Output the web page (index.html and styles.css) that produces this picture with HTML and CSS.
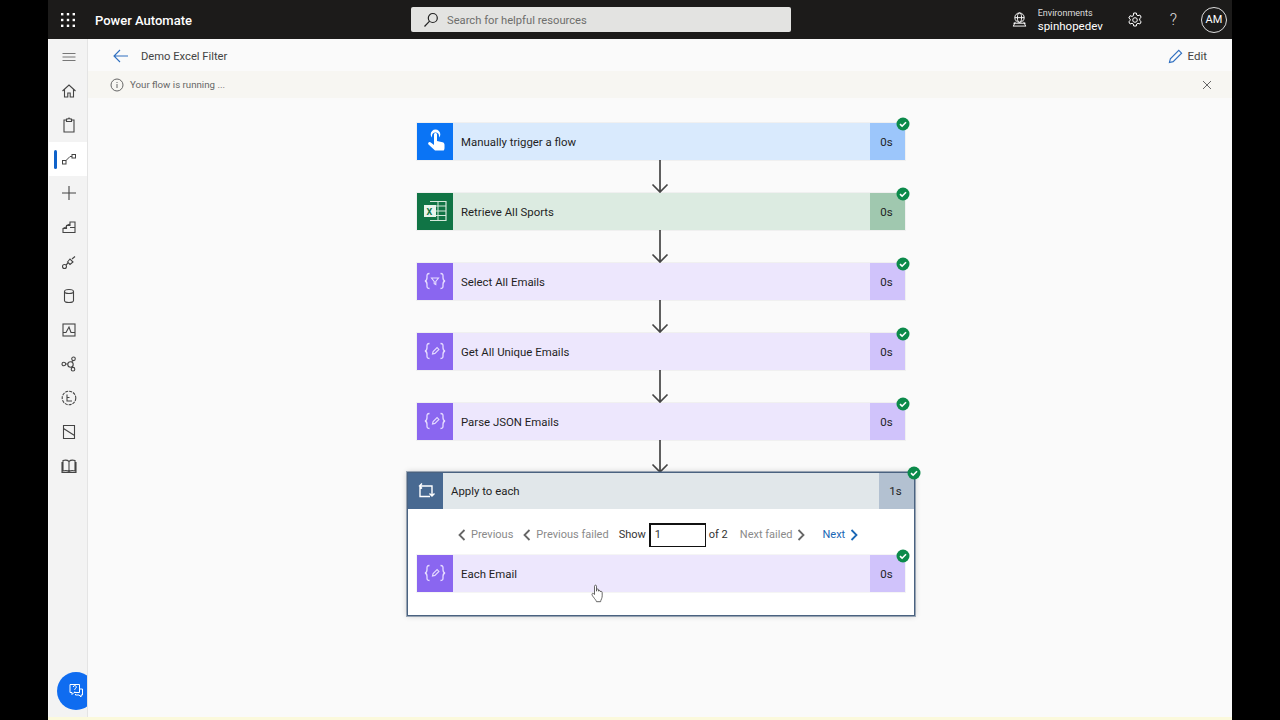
FILE: index.html
```html
<!DOCTYPE html>
<html lang="en">
<head>
    <meta charset="UTF-8">
    <title>Power Automate</title>
    <link rel="stylesheet" href="styles.css">
</head>
<body>
<svg class="defs" width="0" height="0">
    <symbol id="check" viewBox="0 0 14 14">
        <circle cx="7" cy="7" r="6.500" fill="#0b8a4a"/>
        <path d="M4 7.200l2.100 2L10 5.200" fill="none" stroke="#fff" stroke-width="1.600"/>
    </symbol>
    <symbol id="arrow" viewBox="0 0 18 33">
        <path d="M9 0v32M1.500 24.500L9 32l7.500-7.500" fill="none" stroke="#444" stroke-width="1.700"/>
    </symbol>
    <symbol id="braces" viewBox="0 0 36 36">
        <path d="M12.500 10.500c-3 0-2.500 2-2.500 4s0 3-2 3.500c2 .5 2 1.500 2 3.500s-.5 4 2.500 4M23.500 10.500c3 0 2.500 2 2.500 4s0 3 2 3.500c-2 .5-2 1.500-2 3.500s.5 4-2.500 4" fill="none" stroke="#e6dcff" stroke-width="1.300"/>
        <path d="M15.500 21l.6-2.400 4-4 1.800 1.800-4 4z" fill="none" stroke="#e6dcff" stroke-width="1.100"/>
    </symbol>
    <symbol id="braces-filter" viewBox="0 0 36 36">
        <path d="M12.500 10.500c-3 0-2.500 2-2.500 4s0 3-2 3.500c2 .5 2 1.500 2 3.500s-.5 4 2.500 4M23.500 10.500c3 0 2.500 2 2.500 4s0 3 2 3.500c-2 .5-2 1.500-2 3.500s.5 4-2.500 4" fill="none" stroke="#e6dcff" stroke-width="1.300"/>
        <path d="M14.500 15h7l-2.700 3.500v3l-1.600-.8v-2.200z" fill="none" stroke="#e6dcff" stroke-width="1.100"/>
    </symbol>
</svg>

<div class="app">
    <header class="topbar">
        <svg class="waffle" width="16" height="16" viewBox="0 0 16 16" fill="#fff">
            <rect x="1" y="1" width="2.400" height="2.400"/><rect x="6.800" y="1" width="2.400" height="2.400"/><rect x="12.600" y="1" width="2.400" height="2.400"/>
            <rect x="1" y="6.800" width="2.400" height="2.400"/><rect x="6.800" y="6.800" width="2.400" height="2.400"/><rect x="12.600" y="6.800" width="2.400" height="2.400"/>
            <rect x="1" y="12.600" width="2.400" height="2.400"/><rect x="6.800" y="12.600" width="2.400" height="2.400"/><rect x="12.600" y="12.600" width="2.400" height="2.400"/>
        </svg>
        <span class="brand">Power Automate</span>
        <div class="search">
            <svg width="16" height="16" viewBox="0 0 16 16" fill="none" stroke="#222" stroke-width="1.200"><circle cx="9.800" cy="6" r="4.500"/><path d="M6.600 9.200L1.500 14.500"/></svg>
            <span class="search-text">Search for helpful resources</span>
        </div>
        <div class="top-right">
            <svg class="globe" width="15" height="15" viewBox="0 0 16 16" fill="none" stroke="#fff" stroke-width="1"><circle cx="8" cy="6" r="5"/><ellipse cx="8" cy="6" rx="2.200" ry="5"/><path d="M3 6h10M1.500 12h13M1 15h14M3.500 10.500L1.500 15M12.500 10.500l2 4.500"/></svg>
            <div class="env">
                <div class="env-label">Environments</div>
                <div class="env-name">spinhopedev</div>
            </div>
            <svg class="gear" width="16" height="16" viewBox="0 0 16 16" fill="none" stroke="#fff" stroke-width="1"><circle cx="8" cy="8" r="2.300"/><path d="M6.700 1h2.600l.4 2 1.300.7 1.900-.7 1.300 2.300-1.500 1.300v1.800l1.500 1.300-1.300 2.300-1.900-.7-1.300.7-.4 2H6.700l-.4-2-1.300-.7-1.900.7-1.300-2.300 1.500-1.300V7.300L1.800 6l1.300-2.300 1.900.7 1.300-.7z"/></svg>
            <span class="help">?</span>
            <span class="avatar">AM</span>
        </div>
    </header>

    <div class="body-row">
        <nav class="sidebar">
            <div class="nav-item nav-menu"><svg width="16" height="16" viewBox="0 0 16 16" stroke="#777" stroke-width="1"><path d="M1.500 4.500h13M1.500 8h13M1.500 11.500h13"/></svg></div>
            <div class="nav-item"><svg width="16" height="16" viewBox="0 0 16 16" fill="none" stroke="#444" stroke-width="1.100"><path d="M1.500 8L8 2l6.500 6M3.500 6.500V14h3.300v-4h2.400v4h3.300V6.500"/></svg></div>
            <div class="nav-item"><svg width="16" height="16" viewBox="0 0 16 16" fill="none" stroke="#444" stroke-width="1.100"><path d="M5.500 3H3v12h10V3h-2.500M5.500 2h1.500a1 1 0 0 1 2 0h1.500v2.500h-5z"/></svg></div>
            <div class="nav-item nav-active"><svg width="16" height="16" viewBox="0 0 16 16" fill="none" stroke="#444" stroke-width="1"><rect x="1.500" y="9.500" width="3.500" height="3.500"/><rect x="11" y="3.500" width="3.500" height="3.500"/><path d="M5 9.500L9 5.500h2"/></svg></div>
            <div class="nav-item"><svg width="16" height="16" viewBox="0 0 16 16" stroke="#444" stroke-width="1.100"><path d="M8 1v14M1 8h14"/></svg></div>
            <div class="nav-item"><svg width="16" height="16" viewBox="0 0 16 16" fill="none" stroke="#444" stroke-width="1.100"><path d="M2 13.500V9.500h3.500V6.500H9V3h5v10.500zM2 9.500l3-1.500M5.500 6.500L9 5M9 8.500h5"/></svg></div>
            <div class="nav-item"><svg width="16" height="16" viewBox="0 0 16 16" fill="none" stroke="#444" stroke-width="1.100"><circle cx="3.500" cy="12.500" r="2"/><path d="M5 11l2-2M11 5l3-2.500"/><path d="M6.500 8L9 5l3 3-3 2.500z"/></svg></div>
            <div class="nav-item"><svg width="16" height="16" viewBox="0 0 16 16" fill="none" stroke="#444" stroke-width="1.100"><ellipse cx="8" cy="3.500" rx="4.500" ry="2"/><path d="M3.500 3.500v9c0 1.100 2 2 4.500 2s4.500-.9 4.500-2v-9"/></svg></div>
            <div class="nav-item"><svg width="16" height="16" viewBox="0 0 16 16" fill="none" stroke="#444" stroke-width="1.100"><rect x="2" y="2" width="12" height="12"/><path d="M2 10.500h3L8 5l2 5.500h4"/></svg></div>
            <div class="nav-item"><svg width="16" height="16" viewBox="0 0 16 16" fill="none" stroke="#444" stroke-width="1.100"><circle cx="2.800" cy="8" r="1.800"/><circle cx="9.500" cy="8.500" r="2.700"/><circle cx="12.500" cy="2.800" r="1.800"/><circle cx="12" cy="13.200" r="1.800"/><path d="M4.600 8h2.200M10.800 6l1-1.500M11 11l.5.500"/></svg></div>
            <div class="nav-item"><svg width="16" height="16" viewBox="0 0 16 16" fill="none" stroke="#444" stroke-width="1.100"><circle cx="8" cy="8" r="6.800" stroke-dasharray="3 1"/><path d="M6 4.500v6.500h5M6 7.500h2.500"/></svg></div>
            <div class="nav-item"><svg width="16" height="16" viewBox="0 0 16 16" fill="none" stroke="#444" stroke-width="1.100"><path d="M2.500 1.500h11v13h-11zM2.500 4.500l11 7"/></svg></div>
            <div class="nav-item"><svg width="16" height="16" viewBox="0 0 16 16" fill="none" stroke="#444" stroke-width="1.100"><path d="M8 3.500C6.500 2 4 2 2 2.500v10.500c2-.5 4.500-.5 6 .5 1.500-1 4-1 6-.5V2.500C12 2 9.500 2 8 3.500zM8 3.500v10M1 4v10.500h14V4"/></svg></div>
            <div class="help-fab"><svg width="16" height="16" viewBox="0 0 16 16" fill="none" stroke="#fff" stroke-width="1"><path d="M2 1.500h9.500v8H6L4 11.500v-2H2z"/><path d="M11.500 6h3v6H13v2l-2-2H7.500v-1"/><path d="M5.300 4a1.500 1.500 0 1 1 2 1.500l-.5.700V7M6.800 8v.5"/></svg></div>
        </nav>

        <main class="main">
            <div class="cmdbar">
                <svg class="back" width="16" height="14" viewBox="0 0 16 14" fill="none" stroke="#2f6fc0" stroke-width="1.100"><path d="M15 7H1.200M7 1L1 7l6 6"/></svg>
                <span class="flow-title">Demo Excel Filter</span>
                <button class="edit">
                    <svg width="15" height="15" viewBox="0 0 16 16" fill="none" stroke="#2f6fc0" stroke-width="1.200"><path d="M1.500 14.500l1-4L11.500 1.500l3 3-9 9z"/></svg>
                    <span>Edit</span>
                </button>
            </div>
            <div class="notice">
                <svg width="14" height="14" viewBox="0 0 14 14" fill="none" stroke="#666" stroke-width="1"><circle cx="7" cy="7" r="6"/><path d="M7 6v4M7 4v1"/></svg>
                <span>Your flow is running ...</span>
                <svg class="close" width="10" height="10" viewBox="0 0 10 10" stroke="#666" stroke-width="1"><path d="M1 1l8 8M9 1L1 9"/></svg>
            </div>

            <div class="canvas">
                <div class="card card-trigger">
                    <div class="card-icon"><svg width="36" height="36" viewBox="0 0 36 36" fill="#fff"><path d="M18.500 6.500a4.800 4.800 0 0 1 4.800 4.800c0 1.300-.5 2.400-1.300 3.300v-1.500a3.500 3.500 0 1 0-7 0v1.500c-.8-.9-1.300-2-1.300-3.300a4.800 4.800 0 0 1 4.800-4.800z"/><path d="M17 11.500c0-.9.600-1.500 1.500-1.500s1.500.6 1.500 1.500v6.500l5.500 1.200c1.400.3 2 1.200 2 2.600v3.200c0 1-.3 2-.8 2.500H18l-6.500-6c-.7-.9-.3-2 .5-2.300.8-.3 1.500 0 2.100.6l2.900 2.200z"/></svg></div>
                    <div class="card-title">Manually trigger a flow</div>
                    <div class="card-time">0s</div>
                    <svg class="badge"><use href="#check"/></svg>
                </div>
                <svg class="connector"><use href="#arrow"/></svg>

                <div class="card card-excel">
                    <div class="card-icon"><svg width="36" height="36" viewBox="0 0 36 36"><path d="M13 8.500h16v19H13" fill="none" stroke="#d5e9dc" stroke-width="1.200"/><path d="M21 8.500v19M13 13h16M13 18h16M13 22.500h16" stroke="#d5e9dc" stroke-width="1"/><rect x="7" y="12" width="12" height="12" fill="#e8f3ec"/><text x="9.500" y="21.500" class="xl-mark">X</text></svg></div>
                    <div class="card-title">Retrieve All Sports</div>
                    <div class="card-time">0s</div>
                    <svg class="badge"><use href="#check"/></svg>
                </div>
                <svg class="connector"><use href="#arrow"/></svg>

                <div class="card card-data">
                    <div class="card-icon"><svg width="36" height="36"><use href="#braces-filter"/></svg></div>
                    <div class="card-title">Select All Emails</div>
                    <div class="card-time">0s</div>
                    <svg class="badge"><use href="#check"/></svg>
                </div>
                <svg class="connector"><use href="#arrow"/></svg>

                <div class="card card-data">
                    <div class="card-icon"><svg width="36" height="36"><use href="#braces"/></svg></div>
                    <div class="card-title">Get All Unique Emails</div>
                    <div class="card-time">0s</div>
                    <svg class="badge"><use href="#check"/></svg>
                </div>
                <svg class="connector"><use href="#arrow"/></svg>

                <div class="card card-data">
                    <div class="card-icon"><svg width="36" height="36"><use href="#braces"/></svg></div>
                    <div class="card-title">Parse JSON Emails</div>
                    <div class="card-time">0s</div>
                    <svg class="badge"><use href="#check"/></svg>
                </div>
                <svg class="connector"><use href="#arrow"/></svg>

                <div class="loop">
                    <div class="card card-loop">
                        <div class="card-icon"><svg width="35" height="36" viewBox="0 0 35 36" fill="none" stroke="#fff" stroke-width="1.400"><path d="M11.500 13H24v9.500M22 23.500H12V13.500M14 10.500L11.500 13l2.500 2.500M21.500 20.500L24 23l2.500-2.500"/></svg></div>
                        <div class="card-title">Apply to each</div>
                        <div class="card-time">1s</div>
                    </div>
                    <svg class="badge badge-loop"><use href="#check"/></svg>
                    <div class="pager">
                        <span class="page-btn"><svg class="chev" viewBox="0 0 8 12"><path d="M6.500 1L1.500 6l5 5"/></svg>Previous</span>
                        <span class="page-btn"><svg class="chev" viewBox="0 0 8 12"><path d="M6.500 1L1.500 6l5 5"/></svg>Previous failed</span>
                        <span class="show">Show</span>
                        <span class="page-input">1</span>
                        <span class="of">of 2</span>
                        <span class="page-btn">Next failed<svg class="chev chev-r" viewBox="0 0 8 12"><path d="M1.500 1l5 5-5 5"/></svg></span>
                        <span class="page-btn page-next">Next<svg class="chev chev-r" viewBox="0 0 8 12"><path d="M1.500 1l5 5-5 5"/></svg></span>
                    </div>
                    <div class="card card-data">
                        <div class="card-icon"><svg width="36" height="36"><use href="#braces"/></svg></div>
                        <div class="card-title">Each Email</div>
                        <div class="card-time">0s</div>
                        <svg class="badge"><use href="#check"/></svg>
                    </div>
                    <svg class="cursor" width="14" height="19" viewBox="0 0 14 19" fill="#fff" stroke="#555" stroke-width=".9"><path d="M3.500 10.500V2.200c0-1.400 2-1.400 2 0v5l.2-1.500c.2-1 1.700-1 1.800 0v1.500c.2-1 1.700-1 1.800 0V8c.3-.9 1.700-.8 1.800.2.200 2.500.2 5-.5 6.500-.6 1.300-1 2-1 3H5.500c-.5-1.500-1.500-2.500-3-4.500-.8-1-1.500-2-1.500-3 0-.9 1-1.200 1.500-.6z"/></svg>
                </div>
            </div>
        </main>
    </div>
</div>
</body>
</html>
```
FILE: styles.css
```css
body {
    margin: 0;
    height: 720px;
    overflow: hidden;
    background-color: #000;
    font-family: Roboto, "Open Sans", sans-serif;
    color: #323130;
}
.defs {
    position: absolute;
}
.app {
    width: 1184px;
    height: 720px;
    margin: 0 auto;
    display: flex;
    flex-direction: column;
    background-color: #fafafa;
    border-bottom: 3px solid #fbf9dc;
    box-sizing: border-box;
}
.topbar {
    height: 39px;
    flex: none;
    display: flex;
    align-items: center;
    padding-left: 12px;
    background-color: #1c1b1a;
    color: #fff;
}
.brand {
    margin-left: 19px;
    padding-top: 1px;
    font-size: 13px;
    font-weight: 500;
    width: 316px;
}
.search {
    width: 380px;
    height: 25px;
    display: flex;
    align-items: center;
    gap: 8px;
    padding-left: 12px;
    box-sizing: border-box;
    background-color: #e3e3e1;
    border-radius: 2px;
    color: #6e6e6c;
    font-size: 11.200px;
}
.search-text {
    padding-top: 2px;
}
.top-right {
    margin-left: auto;
    display: flex;
    align-items: center;
    padding-right: 5px;
}
.env {
    margin-left: 11px;
    margin-right: 23px;
    width: 66px;
}
.env-label {
    font-size: 9px;
    line-height: 12px;
    color: #ddd;
}
.env-name {
    font-size: 11.500px;
    line-height: 14px;
}
.help {
    margin-left: 27px;
    margin-right: 24px;
    font-size: 16px;
    font-weight: 300;
    color: #ddd;
}
.avatar {
    width: 26px;
    height: 26px;
    box-sizing: border-box;
    border: 1px solid #ddd;
    border-radius: 50%;
    display: flex;
    align-items: center;
    justify-content: center;
    font-size: 11px;
}
.body-row {
    flex: 1;
    display: flex;
    min-height: 0;
}
.sidebar {
    position: relative;
    width: 40px;
    flex: none;
    box-sizing: border-box;
    overflow: hidden;
    background-color: #f3f3f3;
    border-right: 1px solid #e4e4e4;
    border-left: 1px solid #f8f8f8;
}
.nav-item {
    position: relative;
    height: 34.100px;
    box-sizing: border-box;
    padding-left: 2px;
    display: flex;
    align-items: center;
    justify-content: center;
}
.nav-menu {
    height: 35px;
}
.nav-active {
    background-color: #fff;
}
.nav-active::before {
    content: "";
    position: absolute;
    left: 5px;
    top: 8px;
    width: 3px;
    height: 19px;
    border-radius: 2px;
    background-color: #0f62c9;
}
.help-fab {
    position: absolute;
    left: 8px;
    top: 633px;
    width: 38px;
    height: 38px;
    border-radius: 50%;
    background-color: #0f6cf0;
    display: flex;
    align-items: center;
    padding-left: 11px;
    box-sizing: border-box;
}
.main {
    flex: 1;
    min-width: 0;
}
.cmdbar {
    height: 32px;
    box-sizing: border-box;
    padding-top: 2px;
    display: flex;
    align-items: center;
    padding-left: 25px;
    background-color: #fafafa;
}
.flow-title {
    margin-left: 12px;
    font-size: 11.200px;
    color: #444;
}
.edit {
    margin-left: auto;
    margin-right: 25px;
    display: flex;
    align-items: center;
    gap: 5px;
    padding: 0;
    border: 0;
    background: none;
    font-family: inherit;
    font-size: 11.500px;
    color: #444;
}
.notice {
    height: 27px;
    display: flex;
    align-items: center;
    gap: 6px;
    padding-left: 22px;
    background-color: #f7f6f2;
    font-size: 9.700px;
    color: #666;
}
.close {
    margin-left: auto;
    margin-right: 20px;
}
.canvas {
    display: flex;
    flex-direction: column;
    align-items: center;
    padding-top: 25px;
    padding-left: 2px;
}
.card {
    position: relative;
    width: 488px;
    height: 37px;
    flex: none;
    display: flex;
    align-items: center;
    font-size: 11.400px;
    color: #1f1f1f;
    box-shadow: 0 0 0 1px rgba(0, 0, 0, 0.04);
    box-sizing: border-box;
}
.card-icon {
    width: 36px;
    height: 37px;
    flex: none;
}
.card-icon svg {
    display: block;
}
.card-title {
    flex: 1;
    padding-left: 8px;
}
.card-time {
    width: 35px;
    height: 100%;
    flex: none;
    box-sizing: border-box;
    padding-right: 2px;
    display: flex;
    align-items: center;
    justify-content: center;
    font-size: 11.500px;
}
.card-trigger {
    background-color: #d9eafd;
}
.card-trigger .card-icon {
    background-color: #0a74f5;
}
.card-trigger .card-time {
    background-color: #9cc6fb;
}
.card-excel {
    background-color: #dcebe1;
}
.card-excel .card-icon {
    background-color: #107445;
}
.card-excel .card-time {
    background-color: #a0c8af;
}
.xl-mark {
    font-size: 9px;
    font-weight: 700;
    fill: #107445;
}
.card-data {
    background-color: #ede7fd;
}
.card-data .card-icon {
    background-color: #8a66f0;
}
.card-data .card-time {
    background-color: #d0c3fb;
}
.card-loop {
    width: 100%;
    height: 36px;
    box-shadow: none;
    background-color: #e1e7ea;
}
.card-loop .card-icon {
    width: 35px;
    height: 36px;
    background-color: #486991;
}
.card-loop .card-time {
    background-color: #b3c1d1;
}
.badge {
    position: absolute;
    right: -5px;
    top: -6px;
    width: 14px;
    height: 14px;
}
.badge-loop {
    right: -7px;
    top: -7px;
}
.connector {
    width: 18px;
    height: 33px;
    flex: none;
    margin-right: 2px;
}
.loop {
    position: relative;
    width: 508px;
    height: 144px;
    margin-top: -1px;
    box-sizing: border-box;
    border: 1px solid #4a6280;
    background-color: #fff;
    box-shadow: 0 0 0 1px rgba(74, 98, 128, 0.5), 0 0 6px rgba(0, 0, 0, 0.2);
    display: flex;
    flex-direction: column;
    align-items: center;
}
.pager {
    height: 46px;
    width: 100%;
    flex: none;
    display: flex;
    align-items: center;
    padding-left: 50px;
    padding-top: 5px;
    box-sizing: border-box;
    font-size: 11px;
    color: #333;
}
.page-btn {
    display: flex;
    align-items: center;
    color: #8a8a8a;
    margin-right: 10px;
}
.chev {
    width: 8px;
    height: 12px;
    margin-right: 5px;
    fill: none;
    stroke: #666;
    stroke-width: 1.800;
}
.chev-r {
    margin: 0 0 0 5px;
}
.show {
    margin-right: 3px;
}
.page-input {
    width: 57px;
    height: 24px;
    box-sizing: border-box;
    border: 1px solid #111;
    border-width: 2px 1px 1px 2px;
    padding-left: 4px;
    line-height: 20px;
}
.of {
    margin-left: 3px;
    margin-right: 12px;
}
.page-next {
    margin-left: 7px;
    color: #1a67b5;
}
.page-next .chev {
    stroke: #1a67b5;
}
.cursor {
    position: absolute;
    left: 183px;
    top: 111px;
}
```
